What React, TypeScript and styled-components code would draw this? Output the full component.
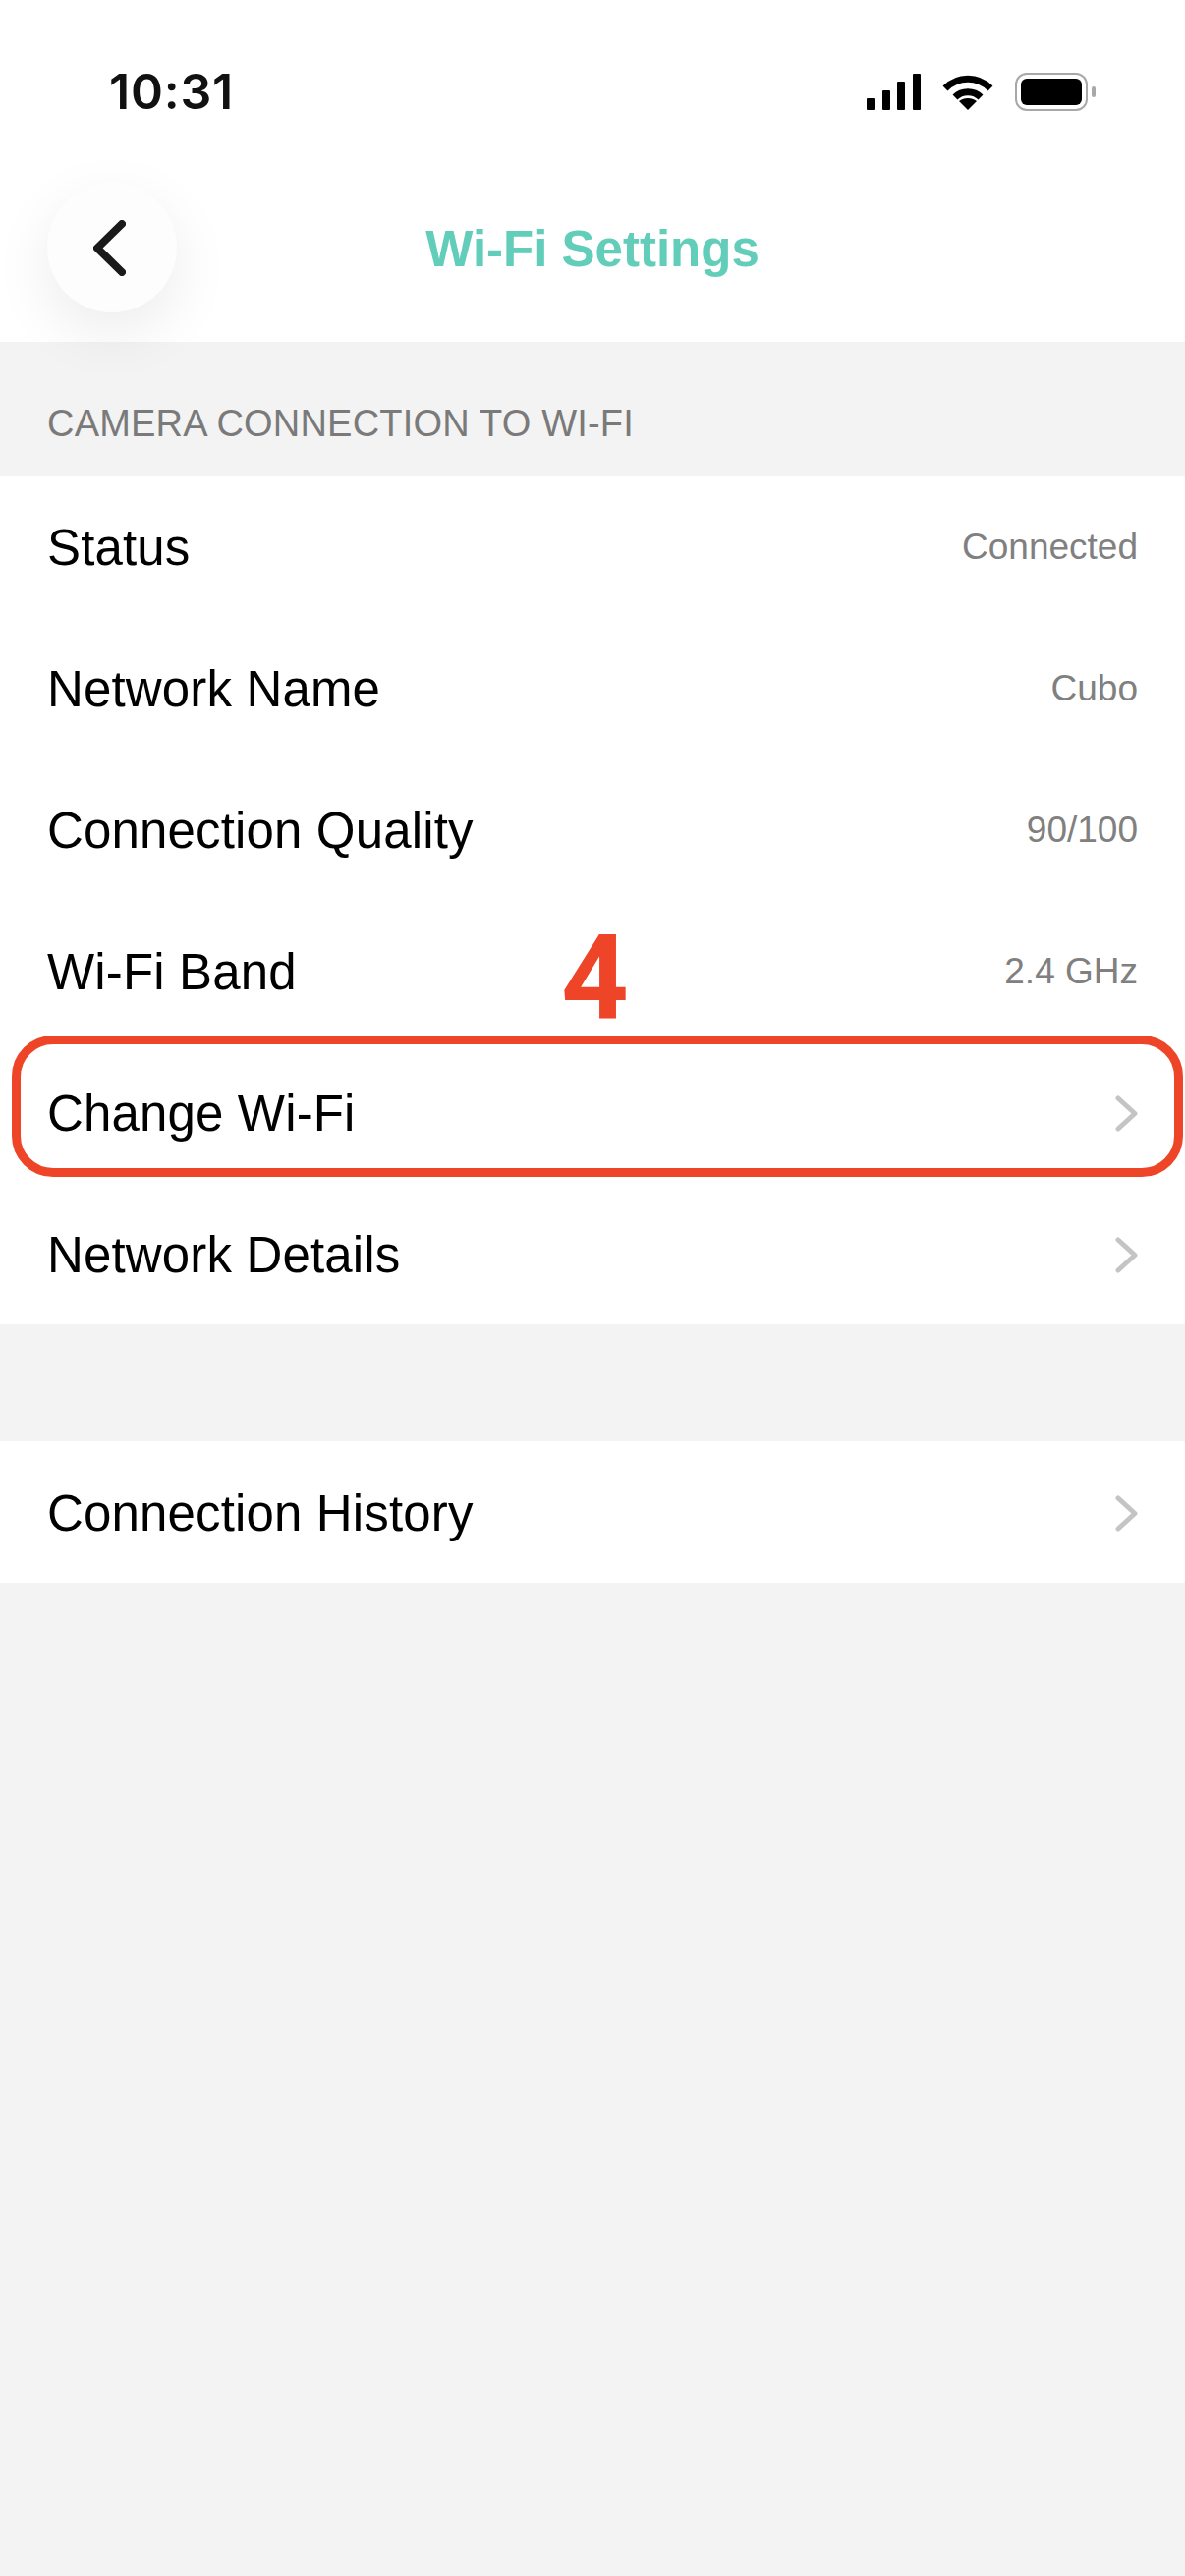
import styled, { createGlobalStyle } from "styled-components"

const GlobalStyle = createGlobalStyle`
  html, body {
    margin: 0;
    padding: 0;
    background: #f3f3f3;
  }
  * {
    box-sizing: border-box;
  }
`

const Screen = styled.div`
  width: 1206px;
  height: 2622px;
  overflow: hidden;
  background: #f3f3f3;
  font-family: "Liberation Sans", Arial, sans-serif;
`

const Header = styled.header`
  position: relative;
  z-index: 1;
  height: 348px;
  background: #fff;
`

const StatusBar = styled.div`
  display: flex;
  align-items: center;
  justify-content: space-between;
  height: 186px;
  padding: 0 90px 0 111px;
`

const Clock = styled.span`
  font-family: Inter, "Liberation Sans", sans-serif;
  font-size: 50px;
  font-weight: 600;
  line-height: 1;
  letter-spacing: 0.8px;
  color: #111;
`

const StatusIcons = styled.div`
  display: flex;
  align-items: center;
  gap: 22px;
`

const NavBar = styled.div`
  display: grid;
  grid-template-columns: 132px 1fr 180px;
  align-items: center;
  height: 132px;
  padding-left: 48px;
`

const BackButton = styled.button`
  display: flex;
  align-items: center;
  justify-content: center;
  width: 132px;
  height: 132px;
  padding: 0 6px 0 0;
  border: none;
  border-radius: 50%;
  background: #fdfdfd;
  box-shadow: 0 20px 60px rgba(0, 0, 0, 0.08);
`

const Title = styled.h1`
  margin: 3px 0 0;
  font-size: 51px;
  font-weight: 700;
  line-height: 1;
  text-align: center;
  color: #62cdb9;
`

const SectionLabel = styled.div`
  display: flex;
  align-items: center;
  height: 136px;
  padding: 30px 48px 0;
  font-size: 38px;
  letter-spacing: 0.2px;
  color: #7a7a7a;
`

const Group = styled.section`
  position: relative;
  margin-bottom: 119px;
  background: #fff;
`

const Row = styled.div`
  display: flex;
  align-items: center;
  justify-content: space-between;
  height: 144px;
  padding: 2px 48px 0;
`

const RowLabel = styled.span`
  font-size: 51px;
  letter-spacing: 0.15px;
  color: #000;
`

const RowValue = styled.span`
  font-size: 37px;
  color: #808080;
`

// red callout drawn over the settings list
const Highlight = styled.div`
  position: absolute;
  top: 570px;
  left: 12px;
  width: 1192px;
  height: 144px;
  border: 9px solid #ee4427;
  border-radius: 42px;
`

const StepNumber = styled.span`
  position: absolute;
  top: 452px;
  left: 571px;
  font-family: Roboto, "Liberation Sans", sans-serif;
  font-size: 120px;
  font-weight: 700;
  line-height: 1;
  color: #ee4427;
`

const SignalIcon = () => (
  <svg width="55" height="37" viewBox="0 0 55 37" fill="#000">
    <rect x="0" y="25" width="8" height="12" rx="1" />
    <rect x="16" y="17" width="8" height="20" rx="1" />
    <rect x="31" y="8" width="8" height="29" rx="1" />
    <rect x="47" y="0" width="8" height="37" rx="1" />
  </svg>
)

const WifiIcon = () => (
  <svg width="52" height="37" viewBox="0 0 52 37" fill="none" stroke="#000" strokeWidth="7">
    <path d="M3 15 C16 2 36 2 49 15" />
    <path d="M13 24 C20 17 32 17 39 24" />
    <path d="M26 37 L17 28 C22 24 30 24 35 28 Z" fill="#000" stroke="none" />
  </svg>
)

const BatteryIcon = () => (
  <svg width="83" height="39" viewBox="0 0 83 39">
    <rect x="1" y="1" width="72" height="37" rx="11" fill="none" stroke="#a8a8a8" strokeWidth="2" />
    <rect x="6" y="6" width="62" height="27" rx="6" fill="#000" />
    <rect x="78" y="14" width="4" height="11" rx="2" fill="#a8a8a8" />
  </svg>
)

const BackIcon = () => (
  <svg width="33" height="57" viewBox="0 0 33 57" fill="none">
    <path
      d="M29 4 L4 28.5 L29 53"
      stroke="#1a1a1a"
      strokeWidth="8"
      strokeLinecap="round"
      strokeLinejoin="round"
    />
  </svg>
)

const ChevronIcon = () => (
  <svg width="23" height="37" viewBox="0 0 23 37" fill="none">
    <path
      d="M3 3 L20 18.5 L3 34"
      stroke="#c4c4c4"
      strokeWidth="5"
      strokeLinecap="round"
      strokeLinejoin="round"
    />
  </svg>
)

interface SettingRow {
  label: string
  value?: string
}

const connectionRows: SettingRow[] = [
  { label: "Status", value: "Connected" },
  { label: "Network Name", value: "Cubo" },
  { label: "Connection Quality", value: "90/100" },
  { label: "Wi-Fi Band", value: "2.4 GHz" },
  { label: "Change Wi-Fi" },
  { label: "Network Details" },
]

const SettingsRow = ({ label, value }: SettingRow) => (
  <Row>
    <RowLabel>{label}</RowLabel>
    {value ? <RowValue>{value}</RowValue> : <ChevronIcon />}
  </Row>
)

export default function App() {
  return (
    <Screen>
      <GlobalStyle />
      <Header>
        <StatusBar>
          <Clock>10:31</Clock>
          <StatusIcons>
            <SignalIcon />
            <WifiIcon />
            <BatteryIcon />
          </StatusIcons>
        </StatusBar>
        <NavBar>
          <BackButton aria-label="Back">
            <BackIcon />
          </BackButton>
          <Title>Wi-Fi Settings</Title>
        </NavBar>
      </Header>
      <SectionLabel>CAMERA CONNECTION TO WI-FI</SectionLabel>
      <Group>
        {connectionRows.map((row) => (
          <SettingsRow key={row.label} {...row} />
        ))}
        <StepNumber>4</StepNumber>
        <Highlight />
      </Group>
      <Group>
        <SettingsRow label="Connection History" />
      </Group>
    </Screen>
  )
}
